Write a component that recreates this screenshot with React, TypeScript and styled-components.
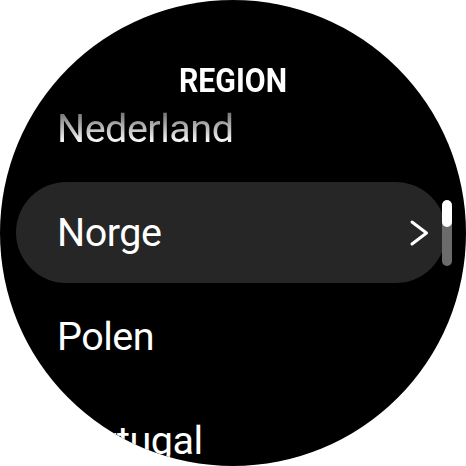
import React from 'react'
import styled, { createGlobalStyle } from 'styled-components'

const regions = ['Nederland', 'Norge', 'Polen', 'Portugal']
const selected = 'Norge'

const GlobalStyle = createGlobalStyle`
  html, body {
    margin: 0;
    padding: 0;
    background: #ffffff;
  }
`

const Screen = styled.div`
  position: relative;
  width: 466px;
  height: 466px;
  border-radius: 50%;
  overflow: hidden;
  background: #000000;
  font-family: Roboto, 'Liberation Sans', sans-serif;
`

// fixed header sitting over the scrolled list
const Title = styled.div`
  position: absolute;
  top: 63px;
  left: 0;
  right: 0;
  text-align: center;
  font-weight: 700;
  font-size: 34px;
  line-height: 1;
  color: #ffffff;
  transform: scaleX(0.89);
`

const List = styled.div`
  display: flex;
  flex-direction: column;
  gap: 3px;
  padding-top: 78px;
`

const Row = styled.div<{ $active?: boolean }>`
  display: flex;
  align-items: center;
  justify-content: space-between;
  flex-shrink: 0;
  height: 101px;
  margin: 0 20px 0 16px;
  padding: 0 17px 0 41px;
  border-radius: 51px;
  background: ${({ $active }) => ($active ? '#262626' : 'transparent')};
`

const Label = styled.span<{ $faded?: boolean }>`
  font-size: 39.5px;
  font-weight: 400;
  letter-spacing: -0.5px;
  color: #ffffff;
  ${({ $faded }) =>
    $faded &&
    `
    background: linear-gradient(to bottom, #7a7a7a 20%, #ffffff 80%);
    -webkit-background-clip: text;
    background-clip: text;
    color: transparent;
  `}
`

const ScrollTrack = styled.div`
  position: absolute;
  top: 200px;
  left: 442px;
  width: 10px;
  height: 66px;
  border-radius: 5px;
  background: #6b6b6b;
  overflow: hidden;
`

const ScrollThumb = styled.div`
  height: 27px;
  border-radius: 5px;
  background: #ffffff;
`

const Chevron = () => (
  <svg width='20' height='28' viewBox='0 0 20 28'>
    <polyline
      points='3,3 17.5,14 3,25'
      fill='none'
      stroke='#ffffff'
      strokeWidth='3'
      strokeLinecap='round'
      strokeLinejoin='round'
    />
  </svg>
)

const App = () => {
  return (
    <>
      <GlobalStyle />
      <Screen>
        <List>
          {regions.map((name, i) => (
            <Row key={name} $active={name === selected}>
              <Label $faded={i === 0}>{name}</Label>
              {name === selected && <Chevron />}
            </Row>
          ))}
        </List>
        <Title>REGION</Title>
        <ScrollTrack>
          <ScrollThumb />
        </ScrollTrack>
      </Screen>
    </>
  )
}

export default App
